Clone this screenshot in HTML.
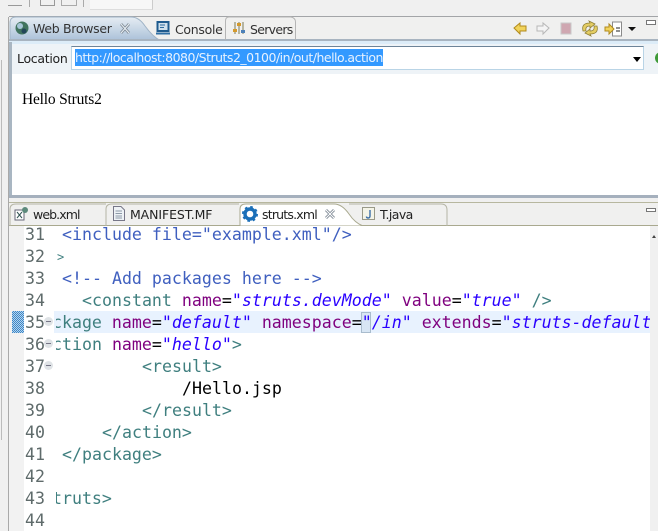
<!DOCTYPE html>
<html><head><meta charset="utf-8">
<style>
html,body{margin:0;padding:0;background:#f0f0f0}
#r{position:relative;width:658px;height:531px;overflow:hidden;background:#f0f0f0;font-family:"Liberation Sans","DejaVu Sans",sans-serif}
.a{position:absolute}
.t{position:absolute;font-size:12.5px;color:#222;white-space:nowrap;line-height:16px;font-family:"DejaVu Sans","Liberation Sans",sans-serif;letter-spacing:-.3px}
.ln{position:absolute;left:25px;margin-top:1px;font:16.6px/22px "DejaVu Sans Mono",monospace;color:#5f6b6b;height:22px}
.c{position:absolute;left:56px;right:8px;height:23px;overflow:hidden}
.c pre{position:absolute;top:1px;margin:0;font:16.6px/22px "DejaVu Sans Mono",monospace;color:#000;white-space:pre}
.c pre.g,.g{color:#3f7f7f}.p{color:#7f007f}.s{color:#2a00ff;font-style:italic}.c pre.b{color:#3f5fbf}
.f{position:absolute;left:44px;width:9px;height:9px;border-radius:50%;background:#dfe3e6;border:0}
.f:after{content:"";position:absolute;left:2px;top:4px;width:5px;height:1px;background:#778}
</style></head><body><div id="r">
<!-- top toolbar -->
<div class="a" style="left:0;top:0;width:658px;height:16px;background:#f0f0f0"></div>
<div class="a" style="left:8px;top:0;width:14px;height:5px;border-bottom:1px solid #999"></div>
<div class="a" style="left:29px;top:0;width:1px;height:7px;background:#aaa"></div>
<div class="a" style="left:40px;top:0;width:13px;height:5px;border:1px solid #999;border-top:0"></div>
<div class="a" style="left:61px;top:0;width:14px;height:5px;border:1px solid #aaa;border-top:0"></div>
<div class="a" style="left:83px;top:0;width:1px;height:7px;background:#aaa"></div>
<div class="a" style="left:90px;top:0;width:62px;height:9px;background:#f7f7f7;border-right:1px solid #ccc;border-bottom:1px solid #ddd"></div>

<!-- left rails -->
<div class="a" style="left:0;top:17px;width:8px;height:514px;background:#f0f0f0;border-right:1px solid #a9a9a9"></div>
<div class="a" style="left:1px;top:60px;width:1px;height:380px;background:#bbb"></div>

<!-- Browser panel -->
<div class="a" style="left:9px;top:16px;width:649px;height:182px;background:#fff"></div>
<div class="a" style="left:9px;top:16px;width:649px;height:24px;background:#f0f0ef;border-top:1px solid #a3a5a8"></div>
<svg class="a" style="left:9px;top:16px" width="160" height="25"><defs><linearGradient id="tg" x1="0" y1="0" x2="0" y2="1"><stop offset="0" stop-color="#e6edf3"/><stop offset="1" stop-color="#a9c0d8"/></linearGradient></defs><path d="M1 25V7Q1 1 7 1H122Q130 1 136 10Q144 21 152 25Z" fill="url(#tg)"/><path d="M1 25V7Q1 1 7 1H122Q130 1 136 10Q144 21 152 25" fill="none" stroke="#9fb3c6"/></svg>
<div class="a" style="left:9px;top:39px;width:649px;height:2px;background:#a8b4c0"></div>
<div class="a" style="left:9px;top:41px;width:649px;height:33px;background:#eef3f7"></div>
<div class="a" style="left:9px;top:41px;width:649px;height:3px;background:#dcecf8"></div>
<div class="a" style="left:9px;top:42px;width:3px;height:155px;background:#a9b6c2"></div>
<div class="a" style="left:12px;top:74px;width:646px;height:121px;background:#fff"></div>
<div class="a" style="left:9px;top:195px;width:649px;height:3px;background:#a5b0bd"></div>

<svg class="a" style="left:15px;top:21px" width="14" height="14"><circle cx="7" cy="7" r="6.5" fill="#41745f"/><circle cx="5" cy="5" r="3" fill="#a7c6d8"/><circle cx="9" cy="10" r="2.5" fill="#23465a"/></svg>
<div class="t" style="left:33px;top:21px;color:#333">Web Browser</div>
<svg class="a" style="left:119px;top:22px" width="12" height="13"><path d="M2 2L10 11M10 2L2 11" stroke="#7d8894" stroke-width="2.8"/><path d="M2 2L10 11M10 2L2 11" stroke="#e6edf2" stroke-width="1.1"/></svg>
<svg class="a" style="left:156px;top:21px" width="14" height="14"><rect x="1.5" y="1" width="11" height="9" fill="#cfe0ec" stroke="#1f5b8e" stroke-width="2"/><path d="M4 4H9M4 6.5H8" stroke="#2c6a9e"/><path d="M0 12.5H14" stroke="#2f6fa5" stroke-width="2"/></svg>
<div class="t" style="left:175px;top:22px;color:#333">Console</div>
<svg class="a" style="left:225px;top:16px" width="72" height="24"><path d="M.5 24V5Q.5 1 4 1H66Q70.5 2 70.5 6V24" fill="none" stroke="#b5b5b5"/></svg>
<svg class="a" style="left:232px;top:21px" width="14" height="14"><path d="M3 1V13M7 1V13M11 1V13" stroke="#7a7a55"/><rect x="1" y="8" width="4" height="3" fill="#d59a2c"/><rect x="5" y="2" width="4" height="3" fill="#d59a2c"/><rect x="9" y="9" width="4" height="3" fill="#4c80b8"/></svg>
<div class="t" style="left:250px;top:22px;color:#333;letter-spacing:-.7px">Servers</div>

<!-- view toolbar icons -->
<svg class="a" style="left:513px;top:20px" width="130" height="18">
<path d="M1 8L7 3V6H13V11H7V14Z" fill="#f1d35a" stroke="#b18a1d"/>
<path d="M36 8L30 3V6H24V11H30V14Z" fill="#f4f4f4" stroke="#b7b7b7"/>
<rect x="48" y="3" width="10" height="11" fill="#cfa7b1" stroke="#c9c9c9"/>
<path d="M70 11Q68 3 77 3L76 1L82 4L77 8V6Q72 6 73 11ZM84 6Q86 14 77 14L78 16L72 13L77 9V11Q82 11 81 6Z" fill="#e4cd63" stroke="#8f7f35" stroke-width=".8"/>
<rect x="99.5" y="2" width="9" height="14" fill="#fff" stroke="#8a8a8a"/>
<path d="M101 9L96 4V7H92V11H96V14Z" fill="#f1d35a" stroke="#b18a1d"/>
<path d="M103 8H107M103 11H107" stroke="#222"/>
<path d="M115 7H123L119 11Z" fill="#111"/>
</svg>
<div class="a" style="left:646px;top:20px;width:8px;height:3px;border:1px solid #777;background:#fff"></div>

<!-- location -->
<div class="t" style="left:17px;top:51px;color:#222">Location</div>
<div class="a" style="left:71px;top:46px;width:573px;height:24px;background:#fff;border:1px solid #b9d4e6;border-top:1px solid #6d8499;box-sizing:border-box"></div>
<div class="a" style="left:75px;top:49px;width:308px;height:17px;background:#3399ff"></div>
<div class="t" style="left:75px;top:50px;color:#e8f2ff;letter-spacing:-.5px">http://localhost:8080/Struts2_0100/in/out/hello.action</div>
<div class="a" style="left:633px;top:57px;border:4px solid transparent;border-top:5px solid #000;border-bottom:0"></div>
<div class="a" style="left:655px;top:52px;width:12px;height:12px;border-radius:50%;background:#3e9a38"></div>

<div class="a" style="left:22px;top:91px;font:15.5px/18px 'Liberation Serif',serif;color:#000;letter-spacing:-.2px">Hello Struts2</div>

<!-- Editor panel -->
<div class="a" style="left:9px;top:198px;width:649px;height:4px;background:#f0f0f0"></div>
<div class="a" style="left:9px;top:202px;width:649px;height:24px;background:#f0f0ef;border-top:1px solid #b7b79f"></div>
<div class="a" style="left:9px;top:225px;width:649px;height:1px;background:#a9a98f"></div>
<svg class="a" style="left:9px;top:201px" width="440" height="26">
<path d="M1 25V8Q1 3 7 3H97" fill="none" stroke="#b5b5a5"/>
<path d="M97 25V8Q97 3 103 3H230" fill="none" stroke="#b5b5a5"/>
<path d="M231 25V8Q231 3 237 3H325Q333 3 340 13Q346 22 354 25Z" fill="#fff" stroke="#a9a98f"/>
<path d="M340 3H432Q438 3 438 9V25" fill="none" stroke="#b5b5a5"/>
</svg>
<svg class="a" style="left:14px;top:206px" width="15" height="15"><rect x="1" y="4" width="9" height="10" fill="#fff" stroke="#667"/><path d="M3 6L8 12M8 6L3 12" stroke="#355"/><circle cx="11" cy="4" r="3" fill="#5c8a7c"/></svg>
<div class="t" style="left:33px;top:207px;color:#222;letter-spacing:-.9px">web.xml</div>
<svg class="a" style="left:112px;top:206px" width="14" height="15"><path d="M1.5 .5H9L12.5 4V14.5H1.5Z" fill="#eef2f6" stroke="#778"/><path d="M3.5 5H10M3.5 7.5H10M3.5 10H10M3.5 12H10" stroke="#8d9aa8"/></svg>
<div class="t" style="left:130px;top:207px;color:#222;letter-spacing:-.1px">MANIFEST.MF</div>
<svg class="a" style="left:242px;top:206px" width="16" height="16"><circle cx="8" cy="8" r="5" fill="none" stroke="#1b6fb8" stroke-width="3.4"/><circle cx="8" cy="8" r="7" fill="none" stroke="#1b6fb8" stroke-width="2" stroke-dasharray="2.6 2.9"/></svg>
<div class="t" style="left:262px;top:207px;color:#222;letter-spacing:-.8px">struts.xml</div>
<svg class="a" style="left:324px;top:208px" width="12" height="12"><path d="M2 2L10 10M10 2L2 10" stroke="#7d8894" stroke-width="2.8"/><path d="M2 2L10 10M10 2L2 10" stroke="#fff" stroke-width="1.1"/></svg>
<svg class="a" style="left:362px;top:207px" width="14" height="14"><rect x=".5" y=".5" width="12" height="12" fill="#f4f4e8" stroke="#998"/><path d="M8 3V9Q8 11 6 11Q4.5 11 4.5 9.5" fill="none" stroke="#3b6ea8" stroke-width="1.4"/></svg>
<div class="t" style="left:380px;top:207px;color:#222;letter-spacing:-.6px">T.java</div>
<div class="a" style="left:646px;top:208px;width:8px;height:2px;border:1px solid #777;background:#fff"></div>

<!-- editor -->
<div class="a" style="left:9px;top:226px;width:649px;height:305px;background:#fff"></div>
<div class="a" style="left:9px;top:226px;width:15px;height:305px;background:#f2f2f2"></div>
<div class="a" style="left:54px;top:311px;width:596px;height:22px;background:#e8f2fe"></div>
<div class="a" style="left:12px;top:311px;width:12px;height:22px;background-image:linear-gradient(45deg,#3e86c6 25%,transparent 25%,transparent 75%,#3e86c6 75%),linear-gradient(45deg,#3e86c6 25%,transparent 25%,transparent 75%,#3e86c6 75%);background-size:2px 2px;background-position:0 0,1px 1px;background-color:#b3d4ee"></div>
<div class="a" style="left:650px;top:226px;width:8px;height:305px;background:#f0f0f0"></div>
<div class="a" style="left:652px;top:235px;border:2px solid transparent;border-bottom:3px solid #444;border-top:0"></div>
<div class="a" style="left:361px;top:312px;width:10px;height:21px;background:#d8e6f4;border:1px solid #a9bccd;box-sizing:border-box"></div>

<div id="nums">
<div class="ln" style="top:223px">31</div><div class="ln" style="top:245px">32</div><div class="ln" style="top:267px">33</div><div class="ln" style="top:289px">34</div><div class="ln" style="top:311px">35</div><div class="ln" style="top:333px">36</div><div class="ln" style="top:355px">37</div><div class="ln" style="top:377px">38</div><div class="ln" style="top:399px">39</div><div class="ln" style="top:421px">40</div><div class="ln" style="top:443px">41</div><div class="ln" style="top:465px">42</div><div class="ln" style="top:487px">43</div><div class="ln" style="top:509px">44</div>
</div>
<div class="f" style="top:317px"></div><div class="f" style="top:339px"></div><div class="f" style="top:361px"></div>

<div class="c" style="top:223px"><pre style="left:6px" class="b">&lt;include file="example.xml"/&gt;</pre></div>
<div class="c" style="top:245px"><pre style="left:1px;color:#3f7f7f;font-size:12px">&gt;</pre></div>
<div class="c" style="top:267px"><pre style="left:6px" class="b">&lt;!-- Add packages here --&gt;</pre></div>
<div class="c" style="top:289px"><pre style="left:26px"><span class="g">&lt;constant </span><span class="p">name</span>=<span class="s">"struts.devMode"</span> <span class="p">value</span>=<span class="s">"true"</span> <span class="g">/&gt;</span></pre></div>
<div class="c" style="top:311px"><pre style="left:-34px"><span class="g">&lt;package </span><span class="p">name</span>=<span class="s">"default"</span> <span class="p">namespace</span>=<span class="s">"/in"</span> <span class="p">extends</span>=<span class="s">"struts-default"</span></pre></div>
<div class="c" style="top:333px"><pre style="left:-24px"><span class="g">&lt;action </span><span class="p">name</span>=<span class="s">"hello"</span><span class="g">&gt;</span></pre></div>
<div class="c" style="top:355px"><pre style="left:86px" class="g">&lt;result&gt;</pre></div>
<div class="c" style="top:377px"><pre style="left:126px">/Hello.jsp</pre></div>
<div class="c" style="top:399px"><pre style="left:86px" class="g">&lt;/result&gt;</pre></div>
<div class="c" style="top:421px"><pre style="left:46px" class="g">&lt;/action&gt;</pre></div>
<div class="c" style="top:443px"><pre style="left:6px" class="g">&lt;/package&gt;</pre></div>
<div class="c" style="top:487px"><pre style="left:-34px" class="g">&lt;/struts&gt;</pre></div>
</div></body></html>
